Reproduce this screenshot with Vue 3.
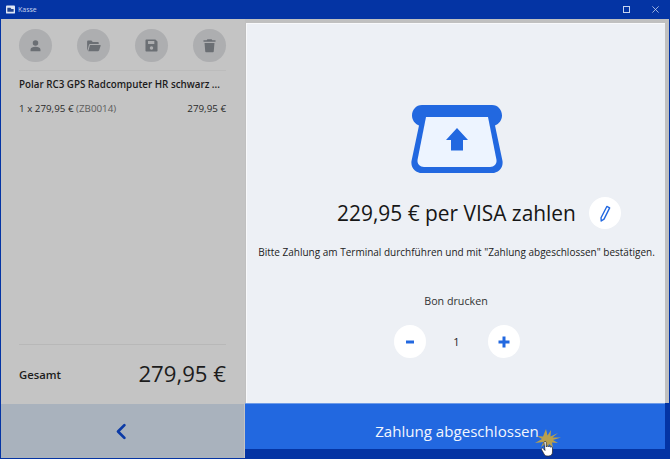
<script setup>
const actions = [
  { name: 'user', path: 'M12 4.500a3.900 3.900 0 1 1 0 7.800 3.900 3.900 0 0 1 0-7.800zM5 20v-2.500c0-2.500 3.200-3.800 7-3.800s7 1.300 7 3.800V20z' },
  { name: 'folder', path: 'M3 19V6.500C3 5.700 3.700 5 4.500 5H9l2 2.200h7c.8 0 1.400.6 1.400 1.400V10H7.200c-.8 0-1.400.4-1.700 1.200L3.400 19zM7 11.300h14.500c.5 0 .8.5.6 1L20 18.800c-.2.7-.8 1.200-1.500 1.200H4.600z' },
  { name: 'save', path: 'M4.500 3.500h13l3 3v13c0 .6-.4 1-1 1h-15c-.6 0-1-.4-1-1v-15c0-.6.4-1 1-1zM7 5.500V10h9V5.500zM12 13a2.500 2.500 0 1 0 0 5 2.500 2.500 0 0 0 0-5z' },
  { name: 'trash', path: 'M9 3h6l1 1.500h4.500v2.300h-17V4.500H8zM5 8.500h14l-1 12c0 .6-.5 1-1.100 1H7.100c-.6 0-1.100-.4-1.100-1z' },
]
</script>

<template>
  <div class="window">
    <header class="titlebar">
      <div class="title">
        <svg class="app-icon" viewBox="0 0 10 10" width="9" height="9">
          <rect width="10" height="9" y="0.500" rx="1" fill="#dfe6f5" />
          <path d="M1.500 3h3.500l1 1.400h2.500v3h-7z" fill="#22438f" />
        </svg>
        <span>Kasse</span>
      </div>
      <div class="controls">
        <span class="maximize"></span>
        <svg viewBox="0 0 9 9" class="close">
          <path d="M.5.5l8 8M8.500.5l-8 8" stroke="#c7d3ee" stroke-width="1" fill="none" />
        </svg>
      </div>
    </header>

    <div class="body">
      <aside class="left">
        <div class="receipt">
          <div class="actions">
            <button v-for="a in actions" :key="a.name" class="round" type="button" :aria-label="a.name">
              <svg viewBox="0 0 24 24" width="17" height="17"><path :d="a.path" fill="#6b6f74" fill-rule="evenodd" /></svg>
            </button>
          </div>
          <h2 class="product">Polar RC3 GPS Radcomputer HR schwarz ...</h2>
          <div class="line">
            <span>1 x 279,95 € <span class="sku">(ZB0014)</span></span>
            <span>279,95 €</span>
          </div>
          <div class="total">
            <strong>Gesamt</strong>
            <span class="total-value">279,95 €</span>
          </div>
        </div>
        <button class="back" type="button" aria-label="Zurück">
          <svg viewBox="0 0 14 20" width="12" height="17">
            <path d="M11 2.500L3.500 10l7.500 7.500" fill="none" stroke="#0b3aa6" stroke-width="3.200" stroke-linecap="round" stroke-linejoin="round" />
          </svg>
        </button>
      </aside>

      <main class="right">
        <div class="panel-frame">
          <section class="panel">
            <svg class="terminal" viewBox="0 0 92 68" width="92" height="68">
              <path d="M11 0H81C87 0 91 5 91 10.500C91 15 88 19 84 20.500L91.500 56C92.500 63 87 68 81 68H11C5 68 -.5 63 .5 56L8 20.500C4 19 1 15 1 10.500C1 5 5 0 11 0Z" fill="#2268e0" />
              <path d="M15 12H77L85.500 55C86 59 83 62 79 62H13C9 62 6 59 6.500 55Z" fill="#edf4ff" />
              <path d="M46 23L57 35H52V45.500H40V35H35Z" fill="#2268e0" />
            </svg>
            <div class="pay-row">
              <span class="pay-text">229,95 € per VISA zahlen</span>
              <button class="white-round edit" type="button" aria-label="Bearbeiten">
                <svg viewBox="0 0 16 20" width="15" height="19">
                  <path d="M10.500 2.500l3 1.500-6 12-3 2-.2-3.500z" fill="none" stroke="#2268e0" stroke-width="1.500" stroke-linejoin="round" />
                </svg>
              </button>
            </div>
            <p class="hint">Bitte Zahlung am Terminal durchführen und mit "Zahlung abgeschlossen" bestätigen.</p>
            <div class="print-label">Bon drucken</div>
            <div class="stepper">
              <button class="white-round sign" type="button" aria-label="Weniger">
                <svg viewBox="0 0 14 14" width="14" height="14"><path d="M3 7h8" stroke="#2268e0" stroke-width="3" /></svg>
              </button>
              <span class="count">1</span>
              <button class="white-round sign" type="button" aria-label="Mehr">
                <svg viewBox="0 0 14 14" width="14" height="14"><path d="M1.500 7h11M7 1.500v11" stroke="#2268e0" stroke-width="3" /></svg>
              </button>
            </div>
          </section>
        </div>
        <button class="confirm" type="button">Zahlung abgeschlossen</button>
      </main>
    </div>

    <svg class="cursor" viewBox="0 0 26 30" width="26" height="30">
      <path d="M11 0l1.500 6.500L16 1l-.5 6.500L23 4l-5.500 4.500L26 8.500l-8 2.500 5 3-6-.5 1 5-4-3.500-2 5-1-5.500L6 18l2.500-5L0 14l7-4-5-3 6 .5z" fill="#b8a04e" />
      <path d="M9 13.500c0-1.500 2.200-1.500 2.200 0v4.500c.2-1.200 2-1.200 2.200 0 .2-1 2-1 2.200.2.300-.7 1.900-.5 1.900.6v4.200c0 2.500-1.500 4-4 4h-1.500c-1.500 0-2.300-.7-3-2l-2.500-4.500c-.6-1 .8-2 1.700-1l1.800 2z" fill="#fff" stroke="#222" stroke-width=".7" />
    </svg>
  </div>
</template>

<style>
html, body { margin: 0; padding: 0; background: #0033a0; }
</style>

<style scoped>
.window {
  position: relative;
  width: 670px;
  height: 459px;
  display: flex;
  flex-direction: column;
  overflow: hidden;
  background: #0434a4;
  font-family: "Open Sans", "Noto Sans", sans-serif;
  color: #1c1c1c;
}
button { border: 0; padding: 0; font-family: inherit; cursor: pointer; }
.titlebar {
  height: 19px;
  flex: none;
  display: flex;
  align-items: center;
  justify-content: space-between;
  background: #0434a4;
  color: #c9d5ee;
  font-size: 7px;
}
.title { display: flex; align-items: center; gap: 3px; padding-left: 6px; }
.controls { display: flex; align-items: center; gap: 22px; padding-right: 11px; }
.maximize { width: 5px; height: 5px; border: 1px solid #c7d3ee; }
.close { width: 7px; height: 7px; }
.body { flex: 1; display: flex; min-height: 0; padding-left: 1px; }
.left { width: 244px; flex: none; display: flex; flex-direction: column; background: #c4c4c4; height: 439px; }
.receipt { flex: 1; display: flex; flex-direction: column; padding: 10px 19px 0 18px; }
.actions {
  display: flex;
  justify-content: space-between;
  height: 41px;
  border-bottom: 1px solid #bcbcbc;
  align-items: flex-start;
}
.round {
  width: 32.500px;
  height: 33px;
  border-radius: 50%;
  background: #adaeb0;
  display: flex;
  align-items: center;
  justify-content: center;
}
.product { margin: 6px 0 0; font-size: 9.800px; font-weight: 600; line-height: 15px; color: #1b1b1b; white-space: nowrap; }
.line { display: flex; justify-content: space-between; margin-top: 9px; font-size: 9.800px; line-height: 15px; color: #2a2a2a; }
.sku { color: #5c5c5c; }
.total {
  margin-top: auto;
  height: 60px;
  box-sizing: border-box;
  border-top: 1px solid #b8b8b8;
  padding-bottom: 2px;
  display: flex;
  justify-content: space-between;
  align-items: center;
}
.total strong { font-size: 11.300px; font-weight: 600; margin-top: 2px; }
.total-value { font-size: 22.200px; line-height: 30px; }
.back {
  height: 54px;
  width: 243px;
  flex: none;
  background: #a9b2bd;
  display: flex;
  align-items: center;
  justify-content: center;
  padding-right: 4px;
}
.right { flex: 1; display: flex; flex-direction: column; min-width: 0; }
.panel-frame {
  height: 384px;
  flex: none;
  box-sizing: border-box;
  background: #c0c0c0;
  padding: 4px 4px 0 1px;
  margin-right: 1px;
}
.panel {
  height: 100%;
  box-sizing: border-box;
  background: #edf0f5;
  border: 1px solid #f8f9fb;
  border-bottom: 0;
  border-right: 0;
  display: flex;
  flex-direction: column;
  align-items: center;
  padding-top: 81px;
}
.terminal { display: block; margin-left: 1px; }
.pay-row { position: relative; display: flex; align-items: center; margin-top: 24px; margin-left: 1px; }
.pay-text { font-size: 20.900px; line-height: 32px; color: #161616; }
.white-round { border-radius: 50%; background: #fff; display: flex; align-items: center; justify-content: center; }
.edit { position: absolute; left: calc(100% + 13px); top: 0; width: 32px; height: 32px; }
.hint { margin: 16px 0 0; font-size: 10px; line-height: 15px; color: #222; white-space: nowrap; margin-left: 1px; }
.print-label { margin-top: 34px; font-size: 10.700px; line-height: 15px; color: #333; }
.stepper { display: flex; align-items: center; margin-top: 16px; margin-left: 1px; }
.sign { width: 32px; height: 33px; }
.count { width: 62px; text-align: center; font-size: 11px; }
.confirm {
  height: 46px;
  width: 420px;
  flex: none;
  box-sizing: border-box;
  background: #2268e0;
  color: #f2f6fd;
  font-size: 15.100px;
  text-align: center;
  border-top: 1px solid #6f9ce8;
  padding-top: 9px;
  padding-left: 4px;
}
.cursor { position: absolute; left: 535px; top: 429px; }
</style>
